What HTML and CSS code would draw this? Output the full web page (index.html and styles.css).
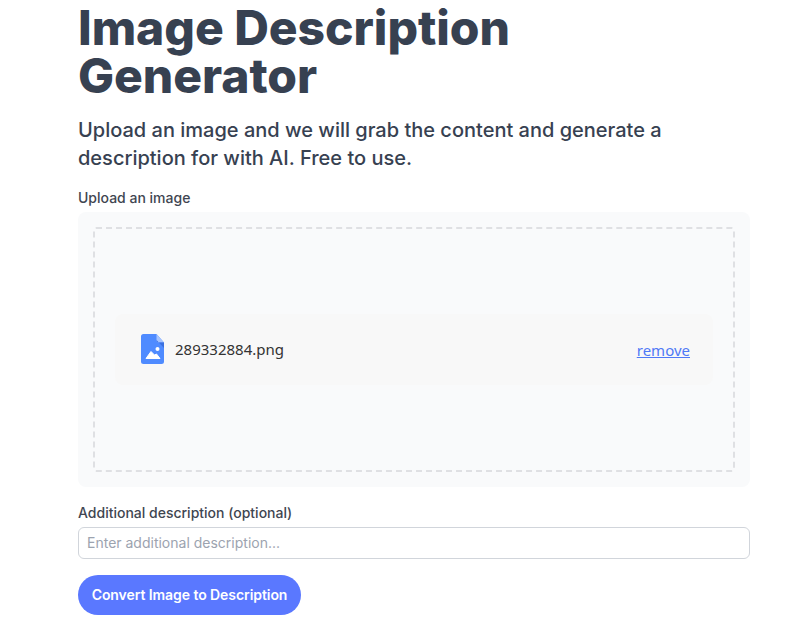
FILE: index.html
```html
<!DOCTYPE html>
<html lang="en">
<head>
<meta charset="utf-8">
<title>Image Description Generator</title>
<link rel="stylesheet" href="styles.css">
</head>
<body>
<main class="page">
  <h1 class="title">Image Description Generator</h1>
  <p class="lead">Upload an image and we will grab the content and generate a description for with AI. Free to use.</p>
  <label class="label label-upload">Upload an image</label>
  <div class="upload">
    <div class="dropzone">
      <div class="file">
        <div class="file-info">
          <svg class="file-icon" width="23" height="30" viewBox="0 0 23 30" aria-hidden="true">
            <path d="M2.500 0H15.500L23 8.500V27.500a2.500 2.500 0 0 1-2.500 2.500h-18A2.500 2.500 0 0 1 0 27.500V2.500A2.500 2.500 0 0 1 2.500 0Z" fill="#4f8bff"/>
            <path d="M15.500 0L23 8.500h-5a2.500 2.500 0 0 1-2.500-2.500Z" fill="#a6c4ff"/>
            <path d="M15.500 6a2.500 2.500 0 0 0 2.500 2.500h5V14Z" fill="#3a70e0"/>
            <circle cx="16.500" cy="15" r="2" fill="#fff"/>
            <path d="M5 24.500l5-7 3.500 3.500 2-1 3.500 4.500H5Z" fill="#fff" stroke="#fff" stroke-linejoin="round"/>
          </svg>
          <span class="file-name">289332884.png</span>
        </div>
        <a class="remove" href="#">remove</a>
      </div>
    </div>
  </div>
  <label class="label label-extra" for="extra">Additional description (optional)</label>
  <input class="input" id="extra" type="text" placeholder="Enter additional description...">
  <button class="submit" type="button">Convert Image to Description</button>
</main>
</body>
</html>
```
FILE: styles.css
```css
* { box-sizing: border-box; }
html, body { margin: 0; padding: 0; background: #fff; }
body { height: 629px; overflow: hidden; font-family: Inter, "Liberation Sans", sans-serif; }
.page { width: 672px; margin-left: 78px; padding-top: 4px; }
.title { margin: 0; font-size: 48px; line-height: 48px; font-weight: 800; letter-spacing: -0.05px; color: #374151; }
.lead { margin: 16px 0 0; font-size: 20px; line-height: 28px; color: #374151; font-weight: 500; }
.label { display: block; font-size: 14px; line-height: 20px; font-weight: 500; color: #3f4651; }
.label-upload { margin-top: 16px; }
.upload { margin-top: 4px; height: 275px; padding: 15px; background: #f9fafb; border-radius: 8px; }
.dropzone { height: 245px; border: 2px dashed #dfe0e3; border-radius: 3px; padding: 0 20px; display: flex; align-items: center; }
.file { flex: 1; height: 71px; padding: 0 23px 0 26px; background: #f8f8f8; border-radius: 8px; display: flex; align-items: center; justify-content: space-between; }
.file-info { display: flex; align-items: center; gap: 11px; margin-top: -1px; }
.file-icon { display: block; }
.file-name { font-family: "Noto Sans", sans-serif; font-size: 15px; line-height: 20px; color: #333; }
.remove { font-family: "Noto Sans", sans-serif; font-size: 15px; line-height: 20px; color: #4f79f6; margin-top: 1px; }
.label-extra { margin-top: 16px; }
.input { display: block; width: 100%; height: 32px; margin-top: 4px; padding: 0 8px 1px; border: 1px solid #d1d5db; border-radius: 6px; background: #fff; font-family: Inter, sans-serif; font-size: 14px; color: #374151; }
.input::placeholder { color: #9ca3af; opacity: 1; }
.submit { display: block; width: 223px; height: 40px; margin-top: 16px; padding: 0 0 2px; border: 0; border-radius: 20px; background: #5a78ff; color: #fff; font-family: Inter, sans-serif; font-size: 14px; font-weight: 600; letter-spacing: -0.07px; }
```
